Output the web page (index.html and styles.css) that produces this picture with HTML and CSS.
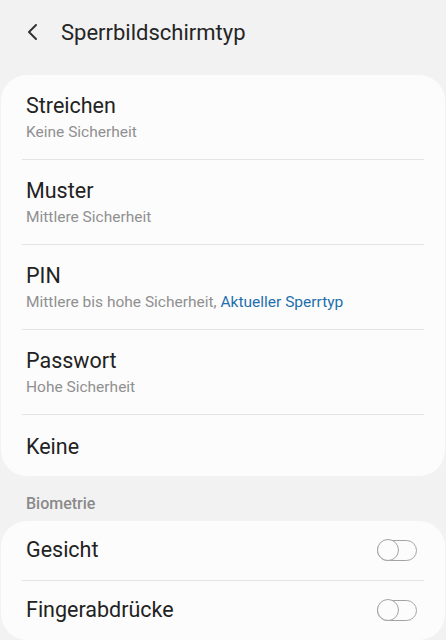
FILE: index.html
```html
<!DOCTYPE html>
<html lang="de">
<head>
    <meta charset="UTF-8">
    <meta name="viewport" content="width=device-width, initial-scale=1.0">
    <title>Sperrbildschirmtyp</title>
    <link rel="stylesheet" href="styles.css">
</head>
<body>

    <div class="header">
        <svg class="back" width="14" height="18" viewBox="0 0 14 18">
            <path d="M10 2 L3 9 L10 16" fill="none" stroke="#333" stroke-width="2" stroke-linecap="round" stroke-linejoin="round"/>
        </svg>
        <span class="title">Sperrbildschirmtyp</span>
    </div>

    <!-- Lock types -->
    <div class="card">
        <div class="row">
            <div class="row-title">Streichen</div>
            <div class="row-sub">Keine Sicherheit</div>
        </div>
        <div class="row">
            <div class="row-title">Muster</div>
            <div class="row-sub">Mittlere Sicherheit</div>
        </div>
        <div class="row">
            <div class="row-title">PIN</div>
            <div class="row-sub">Mittlere bis hohe Sicherheit, <span class="current">Aktueller Sperrtyp</span></div>
        </div>
        <div class="row">
            <div class="row-title">Passwort</div>
            <div class="row-sub">Hohe Sicherheit</div>
        </div>
        <div class="row single">
            <div class="row-title">Keine</div>
        </div>
    </div>

    <div class="section-label">Biometrie</div>

    <!-- Biometrics -->
    <div class="card">
        <div class="row toggle-row">
            <div class="row-title">Gesicht</div>
            <span class="switch"></span>
        </div>
        <div class="row toggle-row">
            <div class="row-title">Fingerabdrücke</div>
            <span class="switch"></span>
        </div>
    </div>

</body>
</html>
```

FILE: styles.css
```css
body {
    margin: 0;
    font-family: Roboto, "Noto Sans", sans-serif;
    background: #f2f2f2;
    color: #222;
}

/* Header */
.header {
    display: flex;
    align-items: center;
    height: 64px;
    padding-left: 26px;
}

.back {
    margin-right: 21px;
}

.title {
    font-size: 22px;
    color: #252525;
}

/* Cards */
.card {
    margin: 11px 1px 0;
    background: #fcfcfc;
    border-radius: 26px;
    overflow: hidden;
}

.row {
    margin: 0 21px;
    padding: 19px 4px 18px;
    border-bottom: 1px solid #e4e4e4;
}

.row:last-child {
    border-bottom: none;
}

.row-title {
    font-size: 21.5px;
    line-height: 24px;
    color: #222;
}

.row-sub {
    margin-top: 5px;
    font-size: 15.5px;
    line-height: 18px;
    color: #909090;
}

.current {
    color: #1f6fae;
}

.single {
    padding: 20px 4px 17px;
}

.section-label {
    padding: 19px 26px 9px;
    font-size: 16px;
    line-height: 17px;
    font-weight: 500;
    color: #8a8a8a;
}

.card + .section-label + .card {
    margin-top: 0;
}

/* Toggle rows */
.toggle-row {
    display: flex;
    align-items: center;
    justify-content: space-between;
    padding: 17px 7px 18px 4px;
}

.switch {
    position: relative;
    width: 38px;
    height: 19px;
    border: 1.5px solid #a3a3a3;
    border-radius: 11px;
}

.switch::before {
    content: "";
    position: absolute;
    left: -1.5px;
    top: -2px;
    width: 20px;
    height: 20px;
    border: 1.5px solid #a3a3a3;
    border-radius: 50%;
    background: #fcfcfc;
}
```
